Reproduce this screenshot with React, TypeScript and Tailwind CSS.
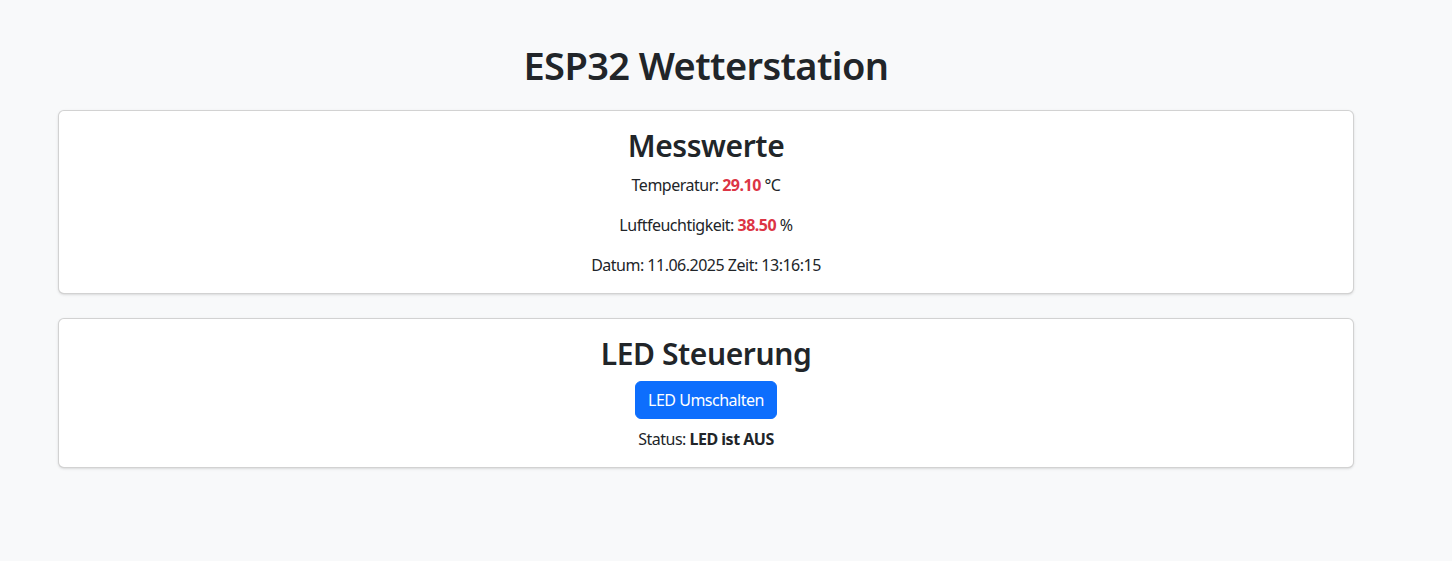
export default function App() {
    return (
        <div
            className="min-h-[561px] w-full bg-[#f8f9fa] text-[#212529] text-base leading-6 tracking-[-0.5px]"
            style={{ fontFamily: '"Noto Sans", "Open Sans", sans-serif' }}
        >
            <div className="pt-[41px] pl-[58px] w-[1354px]">
                {/* Page title */}
                <h1 className="text-center text-[38px] leading-[48px] font-semibold tracking-[-0.6px] mb-[21px]">
                    ESP32 Wetterstation
                </h1>

                {/* Messwerte */}
                <div className="bg-white border border-black/[0.175] rounded-md shadow-sm p-4 text-center mb-6">
                    <h2 className="text-[30px] leading-[38px] font-semibold tracking-[-0.4px] mb-2">Messwerte</h2>
                    <p className="mb-4">
                        Temperatur: <span className="font-bold text-[#dc3545]">29.10</span> °C
                    </p>
                    <p className="mb-4">
                        Luftfeuchtigkeit: <span className="font-bold text-[#dc3545]">38.50</span> %
                    </p>
                    <p>Datum: 11.06.2025 Zeit: 13:16:15</p>
                </div>

                {/* LED Steuerung */}
                <div className="bg-white border border-black/[0.175] rounded-md shadow-sm p-4 text-center">
                    <h2 className="text-[30px] leading-[38px] font-semibold tracking-[-0.4px] mb-2">LED Steuerung</h2>
                    <button className="bg-[#0d6efd] text-white border border-[#0d6efd] rounded-md px-3 py-1.5 leading-6">
                        LED Umschalten
                    </button>
                    <p className="mt-2">
                        Status: <span className="font-bold">LED ist AUS</span>
                    </p>
                </div>
            </div>
        </div>
    );
}
